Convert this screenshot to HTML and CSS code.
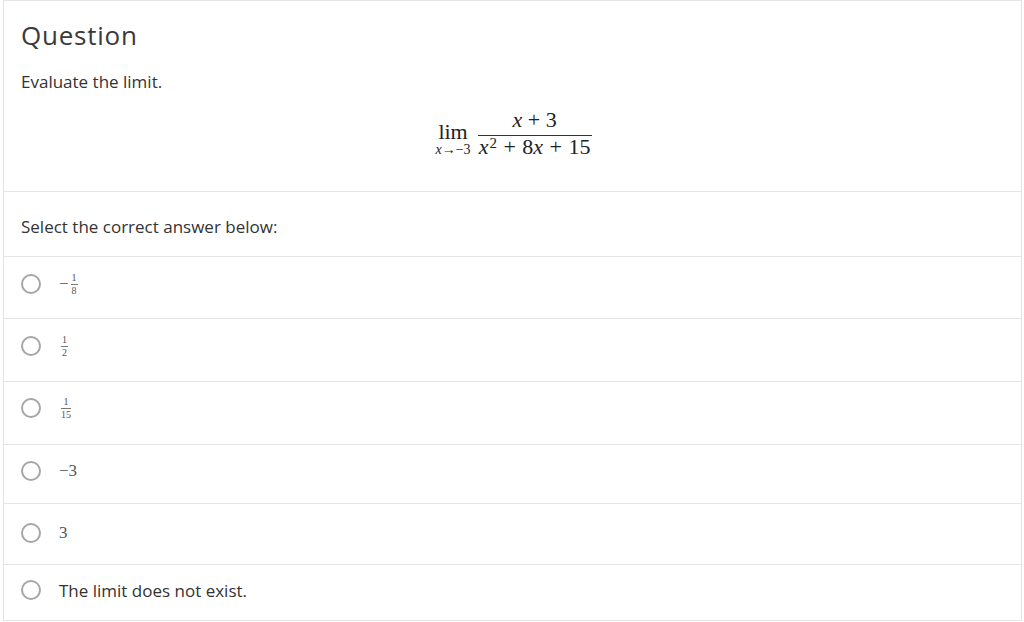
FILE: index.html
```html
<!DOCTYPE html>
<html>
<head>
<meta charset="utf-8">
<link rel="stylesheet" href="styles.css">
</head>
<body>
<div class="panel">
  <section class="question">
    <h1 class="title">Question</h1>
    <p class="prompt">Evaluate the limit.</p>
    <div class="formula">
      <span class="lim"><span class="lim-word">lim</span><span class="lim-sub"><i>x</i>→−3</span></span>
      <span class="frac big">
        <span class="num"><i>x</i> + 3</span>
        <span class="den"><i>x</i><sup>2</sup> + 8<i>x</i> + 15</span>
      </span>
    </div>
  </section>
  <div class="select">Select the correct answer below:</div>
  <ul class="options">
    <li class="option o1"><span class="choice"><span class="radio"></span><span class="math">−<span class="frac small"><span class="num">1</span><span class="den">8</span></span></span></span></li>
    <li class="option o2"><span class="choice"><span class="radio"></span><span class="math"><span class="frac small"><span class="num">1</span><span class="den">2</span></span></span></span></li>
    <li class="option o3"><span class="choice"><span class="radio"></span><span class="math"><span class="frac small"><span class="num">1</span><span class="den">15</span></span></span></span></li>
    <li class="option o4"><span class="choice"><span class="radio"></span><span class="math plain">−3</span></span></li>
    <li class="option o5"><span class="choice"><span class="radio"></span><span class="math plain">3</span></span></li>
    <li class="option o6"><span class="choice"><span class="radio"></span><span class="text">The limit does not exist.</span></span></li>
  </ul>
</div>
</body>
</html>
```
FILE: styles.css
```css
html, body { margin: 0; padding: 0; background: #fff; }
body { font-family: "Open Sans", "Liberation Sans", sans-serif; color: #333; }
.panel {
  margin-left: 3px;
  width: 1019px;
  height: 621px;
  border: 1px solid #e4e4e4;
  box-sizing: border-box;
  overflow: hidden;
}
.question {
  height: 191px;
  padding: 17px 17px 0;
  box-sizing: border-box;
  border-bottom: 1px solid #e4e4e4;
}
.title {
  margin: 0;
  font-size: 26px;
  font-weight: 400;
  line-height: 34px;
  color: #3a3a3a;
  letter-spacing: 0.75px;
}
.prompt {
  margin: 18px 0 0;
  font-size: 17px;
  line-height: 23px;
  color: #333;
}
.formula {
  display: flex;
  justify-content: center;
  align-items: flex-start;
  margin: 16px 0 0;
  padding-left: 2px;
  font-family: "Liberation Serif", "Times New Roman", serif;
  color: #222;
  font-size: 22px;
}
.formula i { font-style: italic; }
.lim {
  display: inline-flex;
  flex-direction: column;
  align-items: center;
  margin-right: 7px;
  margin-top: 11px;
}
.lim-word { font-size: 22px; line-height: 24px; }
.lim-sub { font-size: 14px; line-height: 14px; margin-top: -1px; }
.frac {
  display: inline-flex;
  flex-direction: column;
  align-items: center;
}
.frac .num { border-bottom: 1px solid #333; align-self: stretch; text-align: center; }
.frac.big .num { line-height: 22px; padding-bottom: 4px; }
.frac.big .den { line-height: 22px; padding: 0 1px; word-spacing: 1px; }
.frac.big sup { font-size: 15px; vertical-align: 0; position: relative; top: -6px; margin-left: 1px; }
.select {
  height: 65px;
  padding: 23px 17px 0;
  font-size: 17px;
  line-height: 23px;
  border-bottom: 1px solid #e4e4e4;
  box-sizing: border-box;
}
.options { list-style: none; margin: 0; padding: 0; }
.option {
  display: flex;
  align-items: flex-start;
  padding: 16px 17px 0;
  border-bottom: 1px solid #e4e4e4;
  box-sizing: border-box;
}
.choice {
  display: flex;
  align-items: center;
  height: 20px;
}
.o1 { height: 62px; padding-top: 17px; }
.o2 { height: 63px; padding-top: 17px; }
.o3 { height: 63px; }
.o4 { height: 59px; }
.o5 { height: 61px; padding-top: 19px; }
.o6 { height: 56px; padding-top: 15px; border-bottom: none; }
.radio {
  width: 16px;
  height: 16px;
  border: 2px solid #a6a6a6;
  border-radius: 50%;
  flex: none;
  margin-right: 18px;
}
.math {
  font-family: "Liberation Serif", "Times New Roman", serif;
  color: #555;
  display: inline-flex;
  align-items: center;
  font-size: 17px;
}
.frac.small { font-size: 10px; line-height: 10px; margin-left: 2px; }
.frac.small .num { padding: 0 1px 1px; border-bottom-color: #777; }
.frac.small .den { padding-top: 1px; }
.text { font-size: 17px; color: #333; }
```
